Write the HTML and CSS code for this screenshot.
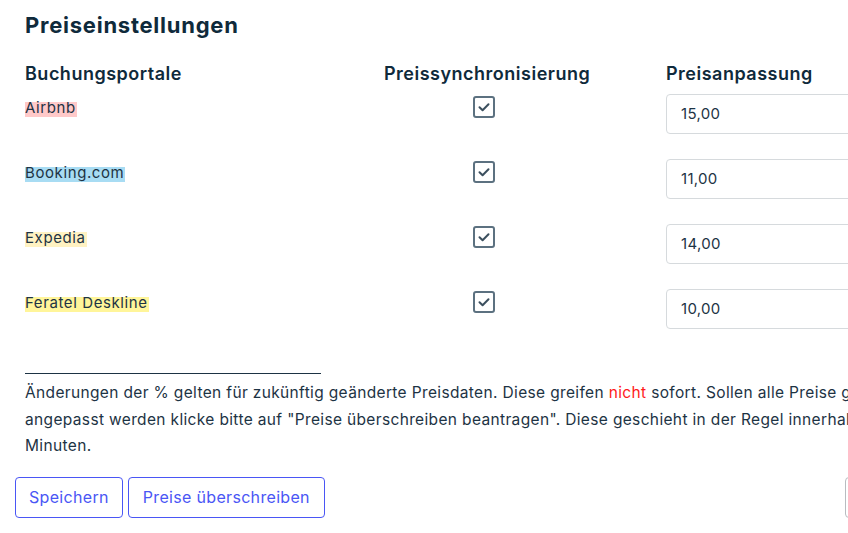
FILE: index.html
```html
<!DOCTYPE html>
<html lang="de">
<head>
<meta charset="utf-8">
<title>Preiseinstellungen</title>
<link rel="stylesheet" href="styles.css">
</head>
<body>
<div class="page">
  <h1 class="title">Preiseinstellungen</h1>
  <div class="grid">
    <div class="head">Buchungsportale</div>
    <div class="head sync">Preissynchronisierung</div>
    <div class="head adj">Preisanpassung</div>

    <div class="portal"><span class="hl hl-airbnb">Airbnb</span></div>
    <div class="sync cell"><span class="check"><svg viewBox="0 0 22 22" width="22" height="22"><path d="M6.5 11.2 L9.6 14.2 L15.5 8.3" fill="none" stroke="#3b4f5e" stroke-width="2" stroke-linecap="round" stroke-linejoin="round"/></svg></span></div>
    <div class="adj cell"><div class="input">15,00</div></div>

    <div class="portal"><span class="hl hl-booking">Booking.com</span></div>
    <div class="sync cell"><span class="check"><svg viewBox="0 0 22 22" width="22" height="22"><path d="M6.5 11.2 L9.6 14.2 L15.5 8.3" fill="none" stroke="#3b4f5e" stroke-width="2" stroke-linecap="round" stroke-linejoin="round"/></svg></span></div>
    <div class="adj cell"><div class="input">11,00</div></div>

    <div class="portal"><span class="hl hl-expedia">Expedia</span></div>
    <div class="sync cell"><span class="check"><svg viewBox="0 0 22 22" width="22" height="22"><path d="M6.5 11.2 L9.6 14.2 L15.5 8.3" fill="none" stroke="#3b4f5e" stroke-width="2" stroke-linecap="round" stroke-linejoin="round"/></svg></span></div>
    <div class="adj cell"><div class="input">14,00</div></div>

    <div class="portal"><span class="hl hl-feratel">Feratel Deskline</span></div>
    <div class="sync cell"><span class="check"><svg viewBox="0 0 22 22" width="22" height="22"><path d="M6.5 11.2 L9.6 14.2 L15.5 8.3" fill="none" stroke="#3b4f5e" stroke-width="2" stroke-linecap="round" stroke-linejoin="round"/></svg></span></div>
    <div class="adj cell"><div class="input">10,00</div></div>
  </div>

  <div class="rule"></div>
  <p class="note">Änderungen der % gelten für zukünftig geänderte Preisdaten. Diese greifen <span class="red">nicht</span> sofort. Sollen alle Preise gleich<br>angepasst werden klicke bitte auf "Preise überschreiben beantragen". Diese geschieht in der Regel innerhalb weniger<br>Minuten.</p>

  <div class="actions">
    <button class="btn">Speichern</button>
    <button class="btn">Preise überschreiben</button>
    <button class="btn btn-grey" aria-label="Abbrechen"></button>
  </div>
</div>
</body>
</html>
```
FILE: styles.css
```css
html, body {
  margin: 0;
  padding: 0;
  background: #ffffff;
  overflow: hidden;
}
body {
  width: 848px;
  height: 533px;
  font-family: Inter, Lato, "Liberation Sans", sans-serif;
  color: #1d3344;
}
.page {
  width: 1200px;
  padding: 10px 0 0 25px;
}
.title {
  margin: 0;
  font-size: 22px;
  line-height: 30px;
  font-weight: 700;
  color: #0f2a3b;
  letter-spacing: 0.75px;
}
.grid {
  display: grid;
  grid-template-columns: 359px 282px 300px;
  grid-template-rows: 32px;
  grid-auto-rows: 65px;
  margin-top: 23px;
}
.head {
  grid-row: 1;
  font-size: 18px;
  font-weight: 600;
  line-height: 22px;
  color: #0f2a3b;
  letter-spacing: 0.5px;
  align-self: start;
}
.head.sync {
  width: 206px;
  white-space: nowrap;
}
.portal {
  font-size: 15px;
  line-height: 20px;
  padding-top: 3px;
  letter-spacing: 0.6px;
}
.hl {
  background: linear-gradient(to bottom, transparent 0, transparent 22%, var(--hl) 22%, var(--hl) 100%);
  padding: 0 1px 0 0;
}
.hl-airbnb { --hl: #ffc9c9; }
.hl-booking { --hl: #a8dcf3; }
.hl-expedia { --hl: #fff2c2; }
.hl-feratel { --hl: #fff59a; }
.sync.cell {
  width: 206px;
  display: flex;
  justify-content: center;
  box-sizing: border-box;
  padding-right: 6px;
}
.check {
  width: 22px;
  height: 22px;
  box-sizing: border-box;
  border: 2px solid #5c7180;
  border-radius: 3px;
  margin-top: 1px;
  display: flex;
  align-items: center;
  justify-content: center;
}
.check svg {
  display: block;
  margin: -2px;
}
.input {
  width: 260px;
  height: 40px;
  margin-top: -1px;
  box-sizing: border-box;
  border: 1px solid #d6dadd;
  border-radius: 4px;
  padding: 0 14px;
  font-size: 15px;
  line-height: 38px;
  color: #1d3344;
  letter-spacing: 0.3px;
}
.rule {
  width: 296px;
  height: 1px;
  background: #1d3344;
  margin-top: 18px;
}
.note {
  margin: 6px 0 0 0;
  font-size: 15.5px;
  line-height: 26.5px;
  white-space: nowrap;
  color: #1d3344;
  letter-spacing: 0.35px;
}
.red { color: #ff1a1a; }
.actions {
  display: flex;
  gap: 5px;
  margin: 17px 0 0 -10px;
}
.btn {
  height: 41px;
  padding: 0 13px;
  border: 1px solid #4a56f5;
  border-radius: 4px;
  background: #ffffff;
  color: #4a56f5;
  font-family: Inter, Lato, "Liberation Sans", sans-serif;
  font-size: 16px;
  letter-spacing: 0.32px;
}
.btn-wide {
  letter-spacing: 0.42px;
}
.btn:nth-child(2) {
  padding: 0 14px;
}
.btn-grey {
  width: 120px;
  margin-left: 515px;
  border-color: #b8bcc0;
  color: #555;
}
```
